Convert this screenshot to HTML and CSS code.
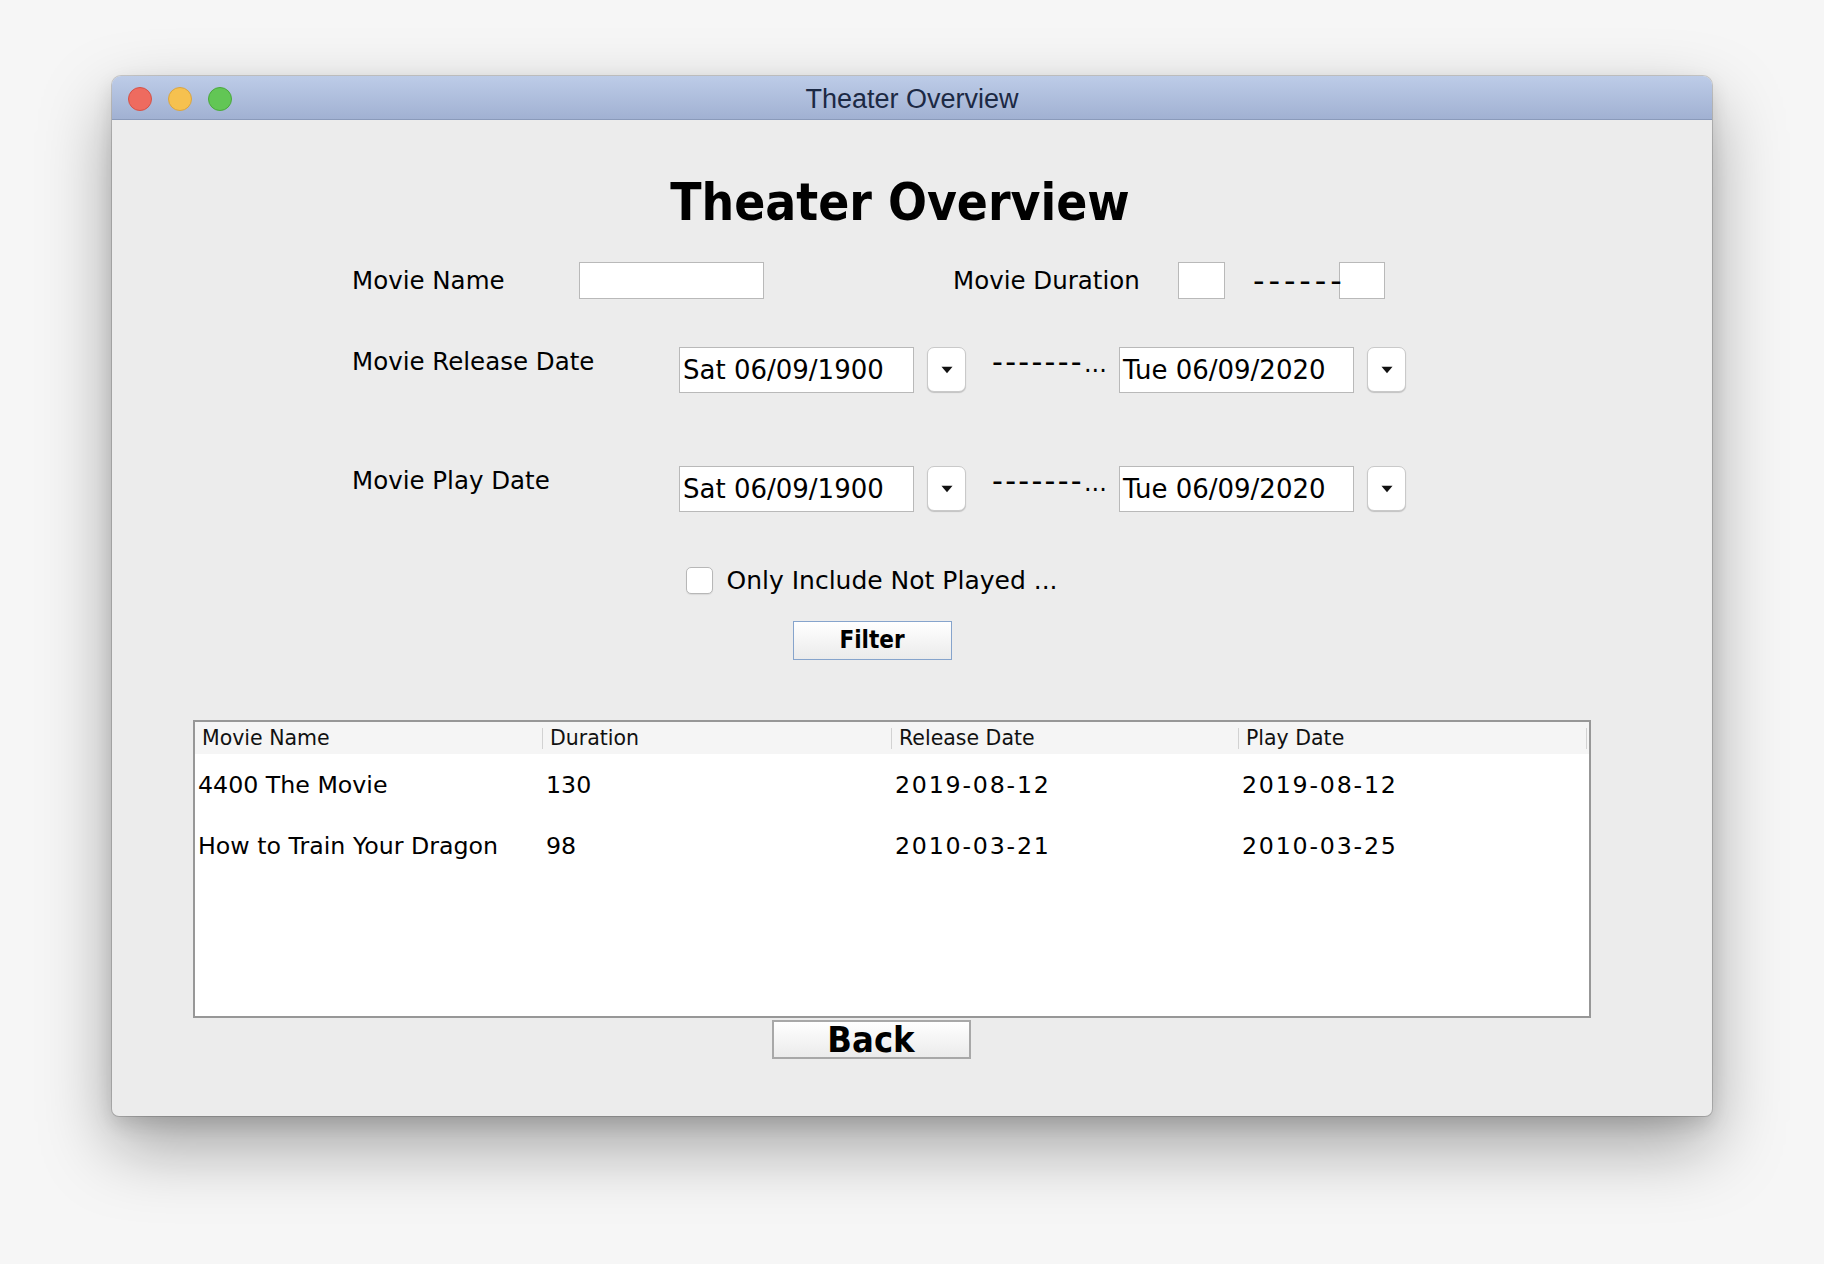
FILE: index.html
```html
<!DOCTYPE html>
<html lang="en">
<head>
<meta charset="utf-8">
<title>Theater Overview</title>
<link rel="stylesheet" href="styles.css">
</head>
<body>
<div class="desk">
  <div class="window">
    <div class="titlebar">
      <div class="lights">
        <span class="light red"></span>
        <span class="light yellow"></span>
        <span class="light green"></span>
      </div>
      <div class="title">Theater Overview</div>
      <div></div>
    </div>
    <div class="content">
      <h1 class="heading">Theater Overview</h1>

      <div class="row row-name">
        <span class="label lbl-name">Movie Name</span>
        <span class="field f-name"></span>
        <span class="label lbl-duration">Movie Duration</span>
        <span class="field f-dur"></span>
        <span class="dashes d-dur">------</span>
        <span class="field f-dur2"></span>
      </div>

      <div class="row row-date row-release">
        <span class="label lbl-date">Movie Release Date</span>
        <span class="field f-date">Sat 06/09/1900</span>
        <span class="drop"><svg width="12" height="8" viewBox="0 0 12 8"><path d="M0.5 0.8h11L6 7.2z" fill="#111"/></svg></span>
        <span class="dashes d-date">-------<span class="dots">...</span></span>
        <span class="field f-date">Tue 06/09/2020</span>
        <span class="drop"><svg width="12" height="8" viewBox="0 0 12 8"><path d="M0.5 0.8h11L6 7.2z" fill="#111"/></svg></span>
      </div>

      <div class="row row-date row-play">
        <span class="label lbl-date">Movie Play Date</span>
        <span class="field f-date">Sat 06/09/1900</span>
        <span class="drop"><svg width="12" height="8" viewBox="0 0 12 8"><path d="M0.5 0.8h11L6 7.2z" fill="#111"/></svg></span>
        <span class="dashes d-date">-------<span class="dots">...</span></span>
        <span class="field f-date">Tue 06/09/2020</span>
        <span class="drop"><svg width="12" height="8" viewBox="0 0 12 8"><path d="M0.5 0.8h11L6 7.2z" fill="#111"/></svg></span>
      </div>

      <div class="center-row check-row">
        <span class="checkbox"></span>
        <span class="check-label">Only Include Not Played ...</span>
      </div>

      <div class="center-row filter-row">
        <button class="btn btn-filter">Filter</button>
      </div>

      <div class="table">
        <div class="thead">
          <div class="th">Movie Name</div>
          <div class="th">Duration</div>
          <div class="th">Release Date</div>
          <div class="th">Play Date</div>
        </div>
        <div class="tbody">
          <div class="tr">
            <div class="td">4400 The Movie</div>
            <div class="td">130</div>
            <div class="td date">2019-08-12</div>
            <div class="td date">2019-08-12</div>
          </div>
          <div class="tr">
            <div class="td">How to Train Your Dragon</div>
            <div class="td">98</div>
            <div class="td date">2010-03-21</div>
            <div class="td date">2010-03-25</div>
          </div>
        </div>
      </div>

      <div class="center-row back-row">
        <button class="btn btn-back">Back</button>
      </div>
    </div>
  </div>
</div>
</body>
</html>
```

FILE: styles.css
```css
html, body {
  margin: 0;
  padding: 0;
}

body {
  width: 1824px;
  height: 1264px;
  overflow: hidden;
  background: #f6f6f6;
  font-family: "DejaVu Sans", sans-serif;
  color: #000;
}

.desk {
  padding: 76px 0 0 112px;
}

.window {
  width: 1600px;
  height: 1040px;
  background: #ececec;
  border-radius: 9px 9px 7px 7px;
  box-shadow: 0 0 0 1px rgba(0, 0, 0, 0.16), 0 30px 70px rgba(0, 0, 0, 0.34), 0 8px 20px rgba(0, 0, 0, 0.12);
  overflow: hidden;
  display: flex;
  flex-direction: column;
}

/* title bar */
.titlebar {
  height: 43px;
  flex: none;
  border-bottom: 1px solid #8a9aba;
  background: linear-gradient(#bdcce8, #a1b1d2);
  display: grid;
  grid-template-columns: 1fr auto 1fr;
  align-items: center;
}

.lights {
  display: flex;
  gap: 16px;
  padding-left: 16px;
}

.light {
  width: 24px;
  height: 24px;
  border-radius: 50%;
  box-sizing: border-box;
}

.red { background: #ee6b5f; border: 1px solid #d45248; }
.yellow { background: #f6c14f; border: 1px solid #d9a441; }
.green { background: #62c655; border: 1px solid #4aa83d; }

.title {
  font-family: "Liberation Sans", Arial, sans-serif;
  font-size: 27px;
  color: #1c2944;
  line-height: 43px;
  padding-top: 2px;
}

/* content */
.content {
  flex: 1;
  display: flex;
  flex-direction: column;
}

.heading {
  margin: 53px 24px 0 0;
  height: 60px;
  text-align: center;
  font-family: "DejaVu Sans Condensed", "DejaVu Sans", sans-serif;
  font-stretch: condensed;
  font-weight: bold;
  font-size: 51px;
  line-height: 60px;
}

.row {
  display: flex;
  margin-left: 240px;
}

.label {
  font-size: 24.5px;
  white-space: nowrap;
}

.field {
  box-sizing: border-box;
  background: #fff;
  border: 1px solid #b9b9b9;
  flex: none;
}

.row-name {
  margin-top: 29px;
  height: 37px;
  align-items: center;
}

.lbl-name { width: 227px; }

.f-name { width: 185px; height: 37px; }

.lbl-duration {
  margin-left: 189px;
  width: 225px;
}

.f-dur { width: 47px; height: 37px; }
.f-dur2 { width: 46px; height: 37px; }

.dashes {
  white-space: nowrap;
  position: relative;
  z-index: 1;
  flex: none;
}

.d-dur {
  margin-left: 28px;
  width: 86px;
  font-size: 32px;
  letter-spacing: 3.9px;
}

.row-date {
  height: 46px;
  align-items: flex-start;
}

.row-release { margin-top: 48px; }
.row-play { margin-top: 73px; }

.lbl-date {
  width: 327px;
  line-height: 30px;
}

.f-date {
  width: 235px;
  height: 46px;
  font-size: 26px;
  padding-left: 3px;
  display: flex;
  align-items: center;
  white-space: nowrap;
}

.drop {
  margin-left: 13px;
  width: 39px;
  height: 45px;
  box-sizing: border-box;
  background: #fff;
  border: 1px solid #c9c9c9;
  border-radius: 7px;
  box-shadow: 0 1px 1px rgba(0, 0, 0, 0.18);
  display: flex;
  align-items: center;
  justify-content: center;
  flex: none;
}

.d-date {
  margin-left: 26px;
  width: 127px;
  font-size: 30px;
  line-height: 30px;
  letter-spacing: 2.3px;
}

.dots {
  font-size: 24px;
  letter-spacing: 0;
}

/* centered rows */
.center-row {
  display: flex;
  justify-content: center;
  align-items: center;
  padding-right: 80px;
}

.check-row {
  margin-top: 55px;
  height: 27px;
  gap: 13px;
}

.checkbox {
  width: 27px;
  height: 27px;
  box-sizing: border-box;
  background: #fff;
  border: 1px solid #b7b7b7;
  border-radius: 5px;
  box-shadow: 0 1px 1px rgba(0, 0, 0, 0.08);
}

.check-label {
  font-size: 25px;
  white-space: nowrap;
}

.btn {
  margin: 0;
  padding: 0;
  box-sizing: border-box;
  font-family: "DejaVu Sans Condensed", "DejaVu Sans", sans-serif;
  font-stretch: condensed;
  font-weight: bold;
  color: #000;
  background: linear-gradient(#ffffff, #ebebeb);
}

.filter-row {
  margin-top: 27px;
}

.btn-filter {
  width: 159px;
  height: 39px;
  border: 1px solid #86a4cc;
  font-size: 24px;
  line-height: 37px;
}

/* table */
.table {
  margin-top: 60px;
  margin-left: 81px;
  width: 1398px;
  height: 298px;
  box-sizing: border-box;
  border: 2px solid #979797;
  background: #fff;
  flex: none;
}

.thead {
  height: 32px;
  display: grid;
  grid-template-columns: 348px 349px 347px 348px;
  background: #f5f5f5;
}

.th {
  font-size: 20.5px;
  line-height: 33px;
  padding-left: 7px;
  color: #111;
  white-space: nowrap;
  background: linear-gradient(#d2d2d2, #d2d2d2) right 6px / 1px 21px no-repeat;
}

.tr {
  height: 61px;
  display: grid;
  grid-template-columns: 348px 349px 347px 348px;
  align-items: center;
}

.td {
  font-size: 23.7px;
  padding-left: 3px;
  white-space: nowrap;
}

.td.date {
  letter-spacing: 1.8px;
}

.back-row {
  margin-top: 2px;
  padding-right: 82px;
}

.btn-back {
  width: 199px;
  height: 39px;
  border: 2px solid #a8a8a8;
  font-size: 36px;
  line-height: 35px;
}
```
